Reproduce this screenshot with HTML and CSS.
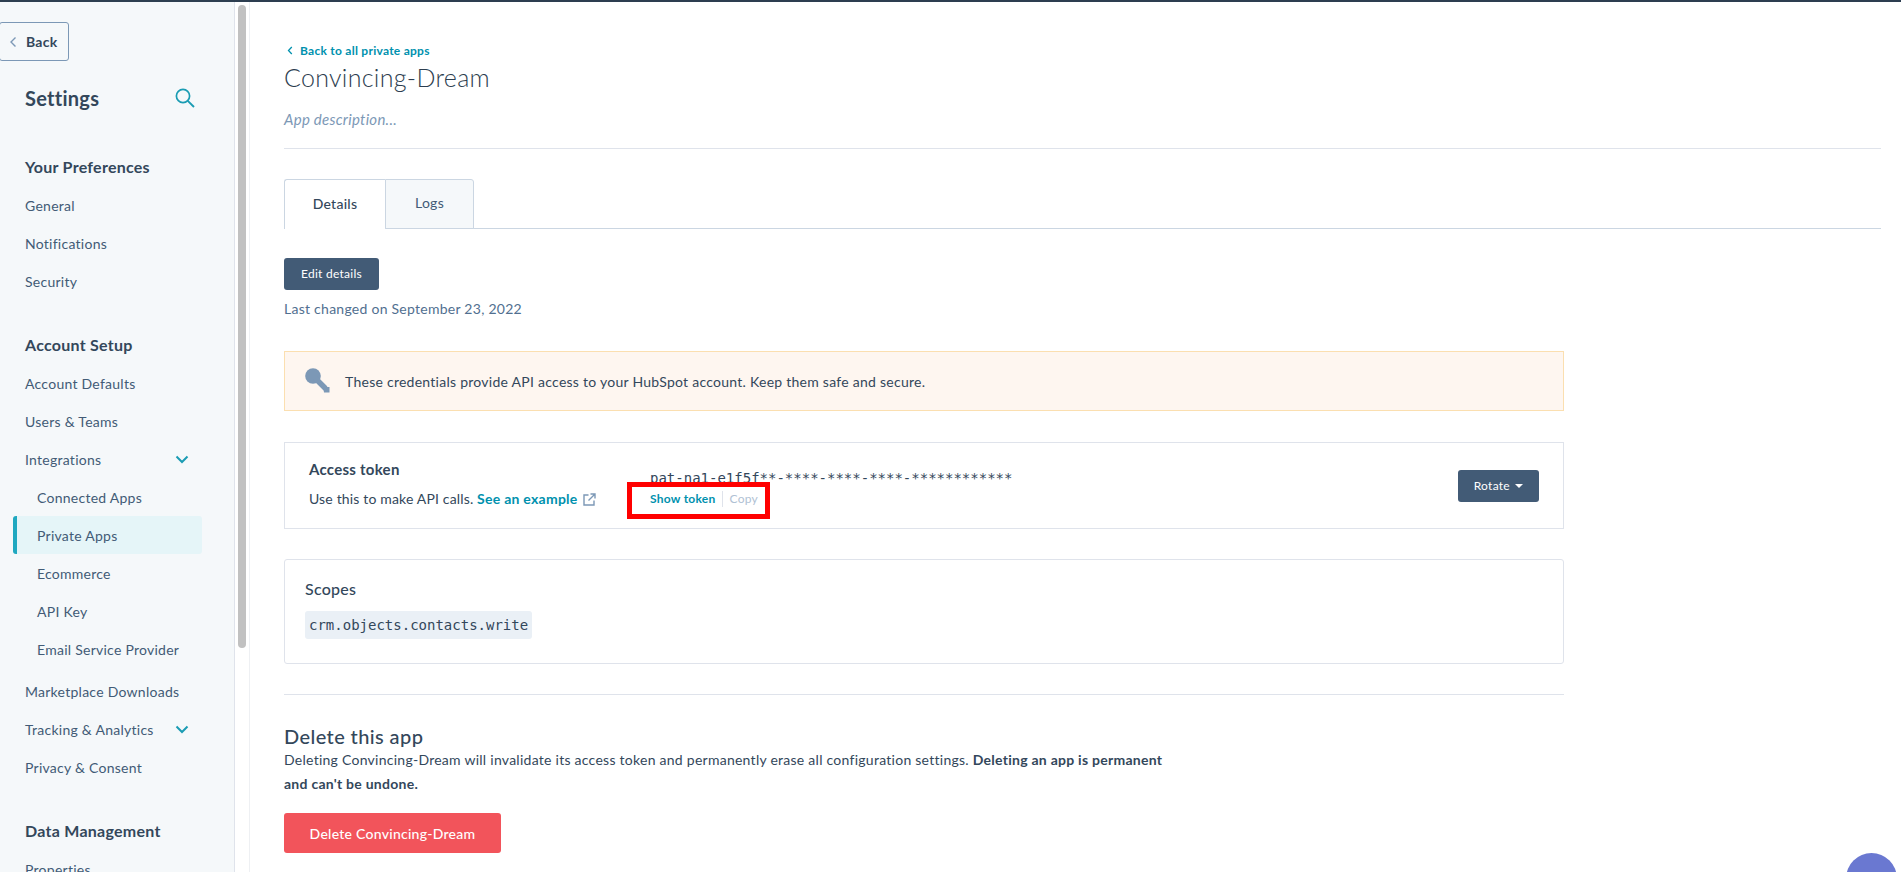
FILE: index.html
```html
<!DOCTYPE html>
<html lang="en">

<head>
  <meta charset="UTF-8">
  <title>Convincing-Dream</title>
  <link rel="stylesheet" href="styles.css">
</head>

<body>
  <div class="layout">
    <aside class="sidebar">
      <button class="back-btn">
        <svg width="8" height="12" viewBox="0 0 8 12"><path d="M6.500 1.500 2 6l4.500 4.500" fill="none" stroke="#7c98b6" stroke-width="1.400"/></svg>
        Back
      </button>
      <div class="sidebar-title">
        <h1>Settings</h1>
        <svg width="20" height="20" viewBox="0 0 20 20"><circle cx="8" cy="8" r="6.600" fill="none" stroke="#1a9cb3" stroke-width="1.700"/><path d="M12.800 12.800 19 19" stroke="#1a9cb3" stroke-width="1.900"/></svg>
      </div>

      <h2 class="nav-head first">Your Preferences</h2>
      <a class="nav-item">General</a>
      <a class="nav-item">Notifications</a>
      <a class="nav-item">Security</a>

      <h2 class="nav-head">Account Setup</h2>
      <a class="nav-item">Account Defaults</a>
      <a class="nav-item">Users &amp; Teams</a>
      <a class="nav-item has-caret">Integrations
        <svg width="14" height="9" viewBox="0 0 14 9"><path d="M1.500 1.500 7 7l5.500-5.500" fill="none" stroke="#1a9cb3" stroke-width="2"/></svg>
      </a>
      <a class="nav-item sub">Connected Apps</a>
      <a class="nav-item sub active">Private Apps</a>
      <a class="nav-item sub">Ecommerce</a>
      <a class="nav-item sub">API Key</a>
      <a class="nav-item sub">Email Service Provider</a>
      <a class="nav-item after-sub">Marketplace Downloads</a>
      <a class="nav-item has-caret">Tracking &amp; Analytics
        <svg width="14" height="9" viewBox="0 0 14 9"><path d="M1.500 1.500 7 7l5.500-5.500" fill="none" stroke="#1a9cb3" stroke-width="2"/></svg>
      </a>
      <a class="nav-item">Privacy &amp; Consent</a>

      <h2 class="nav-head">Data Management</h2>
      <a class="nav-item">Properties</a>
    </aside>

    <div class="scrollbar"><div class="thumb"></div></div>

    <main class="main">
      <a class="back-link">
        <svg width="6" height="9" viewBox="0 0 6 9"><path d="M4.800 1 1.500 4.500 4.800 8" fill="none" stroke="#0091ae" stroke-width="1.300"/></svg>
        Back to all private apps
      </a>
      <h1 class="app-name">Convincing-Dream</h1>
      <p class="app-desc">App description...</p>
      <hr class="rule">

      <div class="tabs">
        <div class="tab current">Details</div>
        <div class="tab">Logs</div>
      </div>

      <button class="btn-dark edit-btn">Edit details</button>
      <p class="changed">Last changed on September 23, 2022</p>

      <div class="content">
        <div class="alert">
          <svg width="25" height="25" viewBox="0 0 25 25"><circle cx="8" cy="8" r="7.800" fill="#7c98b6"/><path d="M10 10 20.500 20.500" stroke="#7c98b6" stroke-width="5.500"/><path d="M18 19h6.500v5.500H19z" fill="#7c98b6"/></svg>
          <span>These credentials provide API access to your HubSpot account. Keep them safe and secure.</span>
        </div>

        <section class="card token-card">
          <div class="token-info">
            <h3>Access token</h3>
            <p>Use this to make API calls. <a class="link">See an example</a>
              <svg class="ext" width="13" height="13" viewBox="0 0 13 13"><path d="M5.500 2H1v10h10V7.500M7.500 1H12v4.500M12 1 5.500 7.500" fill="none" stroke="#7c98b6" stroke-width="1.400"/></svg>
            </p>
          </div>
          <div class="token-value">
            <code>pat-na1-e1f5f**-****-****-****-************</code>
            <div class="token-actions">
              <a class="link">Show token</a>
              <span class="copy">Copy</span>
            </div>
            <div class="highlight"></div>
          </div>
          <button class="btn-dark rotate-btn">Rotate <i class="caret"></i></button>
        </section>

        <section class="card scopes-card">
          <h3>Scopes</h3>
          <code class="scope">crm.objects.contacts.write</code>
        </section>

        <hr class="rule divider">

        <h2 class="delete-head">Delete this app</h2>
        <p class="delete-text">Deleting Convincing-Dream will invalidate its access token and permanently erase all configuration settings. <b>Deleting an app is permanent and can't be undone.</b></p>
        <button class="btn-delete">Delete Convincing-Dream</button>
      </div>
    </main>
  </div>

  <div class="chat"></div>
</body>

</html>
```

FILE: styles.css
```css
* {
  box-sizing: border-box;
}

html,
body {
  height: 872px;
  margin: 0;
  overflow: hidden;
}

body {
  font-family: Lato, "Noto Sans", sans-serif;
  font-size: 14px;
  letter-spacing: .26px;
  color: #33475b;
  background: #fff;
  border-top: 2px solid #2d3e50;
}

.layout {
  display: flex;
  height: 870px;
}

/* Sidebar */
.sidebar {
  width: 235px;
  flex: none;
  background: #f5f8fa;
  border-right: 1px solid #dfe3eb;
  overflow: hidden;
}

.back-btn {
  display: flex;
  align-items: center;
  gap: 9px;
  width: 70px;
  height: 39px;
  margin: 20px 0 0 -1px;
  padding: 0 0 0 9px;
  font: bold 14px Lato, sans-serif;
  letter-spacing: .26px;
  color: #33475b;
  background: #f5f8fa;
  border: 1px solid #7c98b6;
  border-radius: 3px;
}

.sidebar-title {
  display: flex;
  align-items: center;
  justify-content: space-between;
  width: 170px;
  height: 28px;
  margin: 23px 0 0 25px;
}

.sidebar-title h1 {
  margin: 0;
  font-size: 20px;
  font-weight: 700;
}

.nav-head {
  height: 24px;
  margin: 33px 0 7px;
  padding-left: 25px;
  font-size: 16px;
  line-height: 24px;
  font-weight: 700;
}

.nav-head.first {
  margin-top: 43px;
}

.nav-item {
  display: flex;
  align-items: center;
  justify-content: space-between;
  height: 38px;
  width: 202px;
  padding: 0 13px 0 25px;
  color: #425b76;
}

.nav-item.sub {
  padding-left: 37px;
}

.nav-item.active {
  width: 189px;
  margin-left: 13px;
  padding-left: 20px;
  background: #e5f5f8;
  border-left: 4px solid #1fa8c0;
  border-radius: 3px;
}

.nav-item.after-sub {
  margin-top: 4px;
}

.scrollbar {
  width: 15px;
  flex: none;
  padding: 3px 3px 0;
  border-right: 1px solid #eef0f3;
}

.thumb {
  height: 643px;
  background: #c1c1c1;
  border-radius: 4px;
}

/* Main */
.main {
  flex: 1;
  padding: 0 20px 0 34px;
  min-width: 0;
}

.back-link {
  display: flex;
  align-items: center;
  gap: 7px;
  margin-top: 41px;
  height: 15px;
  padding-left: 3px;
  font-size: 12px;
  font-weight: 700;
  color: #0091ae;
}

.app-name {
  margin: 4px 0 0;
  font-size: 25px;
  line-height: 30px;
  font-weight: 300;
  letter-spacing: .3px;
  color: #2d3e50;
}

.app-desc {
  margin: 17px 0 0;
  font-size: 15px;
  line-height: 20px;
  font-style: italic;
  color: #7c98b6;
}

.rule {
  margin: 0;
  border: none;
  border-top: 1px solid #dfe3eb;
}

.app-desc + .rule {
  margin-top: 19px;
}

.tabs {
  display: flex;
  height: 50px;
  margin-top: 30px;
  border-bottom: 1px solid #cbd6e2;
}

.tab {
  display: flex;
  align-items: center;
  justify-content: center;
  width: 89px;
  height: 50px;
  padding-bottom: 3px;
  color: #425b76;
  background: #f5f8fa;
  border: 1px solid #cbd6e2;
  border-radius: 0 3px 0 0;
}

.tab.current {
  width: 101px;
  font-weight: 500;
  color: #33475b;
  background: #fff;
  border-right: none;
  border-bottom: none;
  border-radius: 3px 0 0 0;
}

.btn-dark {
  display: block;
  height: 32px;
  padding-bottom: 2px;
  font: 12px Lato, sans-serif;
  letter-spacing: .26px;
  color: #fff;
  background: #425b76;
  border: none;
  border-radius: 3px;
}

.edit-btn {
  width: 95px;
  margin-top: 29px;
}

.changed {
  margin: 10px 0 0;
  line-height: 18px;
  color: #516f90;
}

.content {
  width: 1280px;
}

.alert {
  display: flex;
  align-items: center;
  gap: 15px;
  height: 60px;
  margin-top: 33px;
  padding-left: 20px;
  background: #fef6f0;
  border: 1px solid #fbdfb0;
}

.alert svg {
  margin-top: -2px;
}

.card {
  background: #fff;
  border: 1px solid #dfe3eb;
}

.card h3 {
  margin: 0;
  font-size: 16px;
  line-height: 20px;
  font-weight: 500;
}

.token-card {
  display: flex;
  align-items: center;
  height: 87px;
  margin-top: 31px;
  padding: 0 24px;
}

.token-card h3 {
  font-weight: 700;
  font-size: 15px;
}

.token-info {
  width: 341px;
  flex: none;
  margin-top: -4px;
}

.token-info p {
  margin: 11px 0 0;
  line-height: 18px;
  letter-spacing: .16px;
}

.token-info .link {
  letter-spacing: .26px;
}

.link {
  font-weight: 700;
  color: #0091ae;
}

.ext {
  margin: 0 0 -2px 2px;
}

.token-value {
  position: relative;
  margin-top: 5px;
}

.token-value code {
  display: block;
  font: 14px/18px "DejaVu Sans Mono", monospace;
  letter-spacing: 0;
  color: #33475b;
}

.token-actions {
  display: flex;
  align-items: center;
  gap: 6px;
  margin-top: 4px;
  font-size: 12px;
  line-height: 16px;
}

.copy {
  padding-left: 7px;
  color: #b0c1d4;
  border-left: 1px solid #dfe3eb;
}

/* red annotation box round the token links */
.highlight {
  position: absolute;
  left: -23px;
  top: 13px;
  width: 143px;
  height: 37px;
  border: 5px solid #f00;
}

.rotate-btn {
  width: 81px;
  margin: 0 0 0 auto;
}

.caret {
  display: inline-block;
  margin: 0 0 2px 2px;
  border-top: 4px solid #fff;
  border-left: 4px solid transparent;
  border-right: 4px solid transparent;
}

.scopes-card {
  height: 105px;
  margin-top: 30px;
  padding: 19px 20px;
  border-radius: 3px;
}

.scope {
  display: inline-block;
  height: 28px;
  margin-top: 12px;
  padding: 0 4px;
  font: 14px/28px "DejaVu Sans Mono", monospace;
  letter-spacing: 0;
  background: #eaf0f6;
  border-radius: 3px;
}

.divider {
  margin-top: 30px;
}

.delete-head {
  margin: 28px 0 -1px;
  font-size: 20px;
  line-height: 26px;
  font-weight: 500;
  letter-spacing: .4px;
}

.delete-text {
  width: 900px;
  margin: 0;
  line-height: 24px;
  color: #33475b;
  font-weight: 400;
}

.btn-delete {
  display: block;
  width: 217px;
  height: 40px;
  margin-top: 17px;
  font: 500 14px Lato, sans-serif;
  letter-spacing: .26px;
  color: #fff;
  background: #f2545b;
  border: none;
  border-radius: 3px;
}

.chat {
  position: fixed;
  left: 1846px;
  top: 853px;
  width: 51px;
  height: 51px;
  background: #6a78d1;
  border-radius: 50%;
}
```
